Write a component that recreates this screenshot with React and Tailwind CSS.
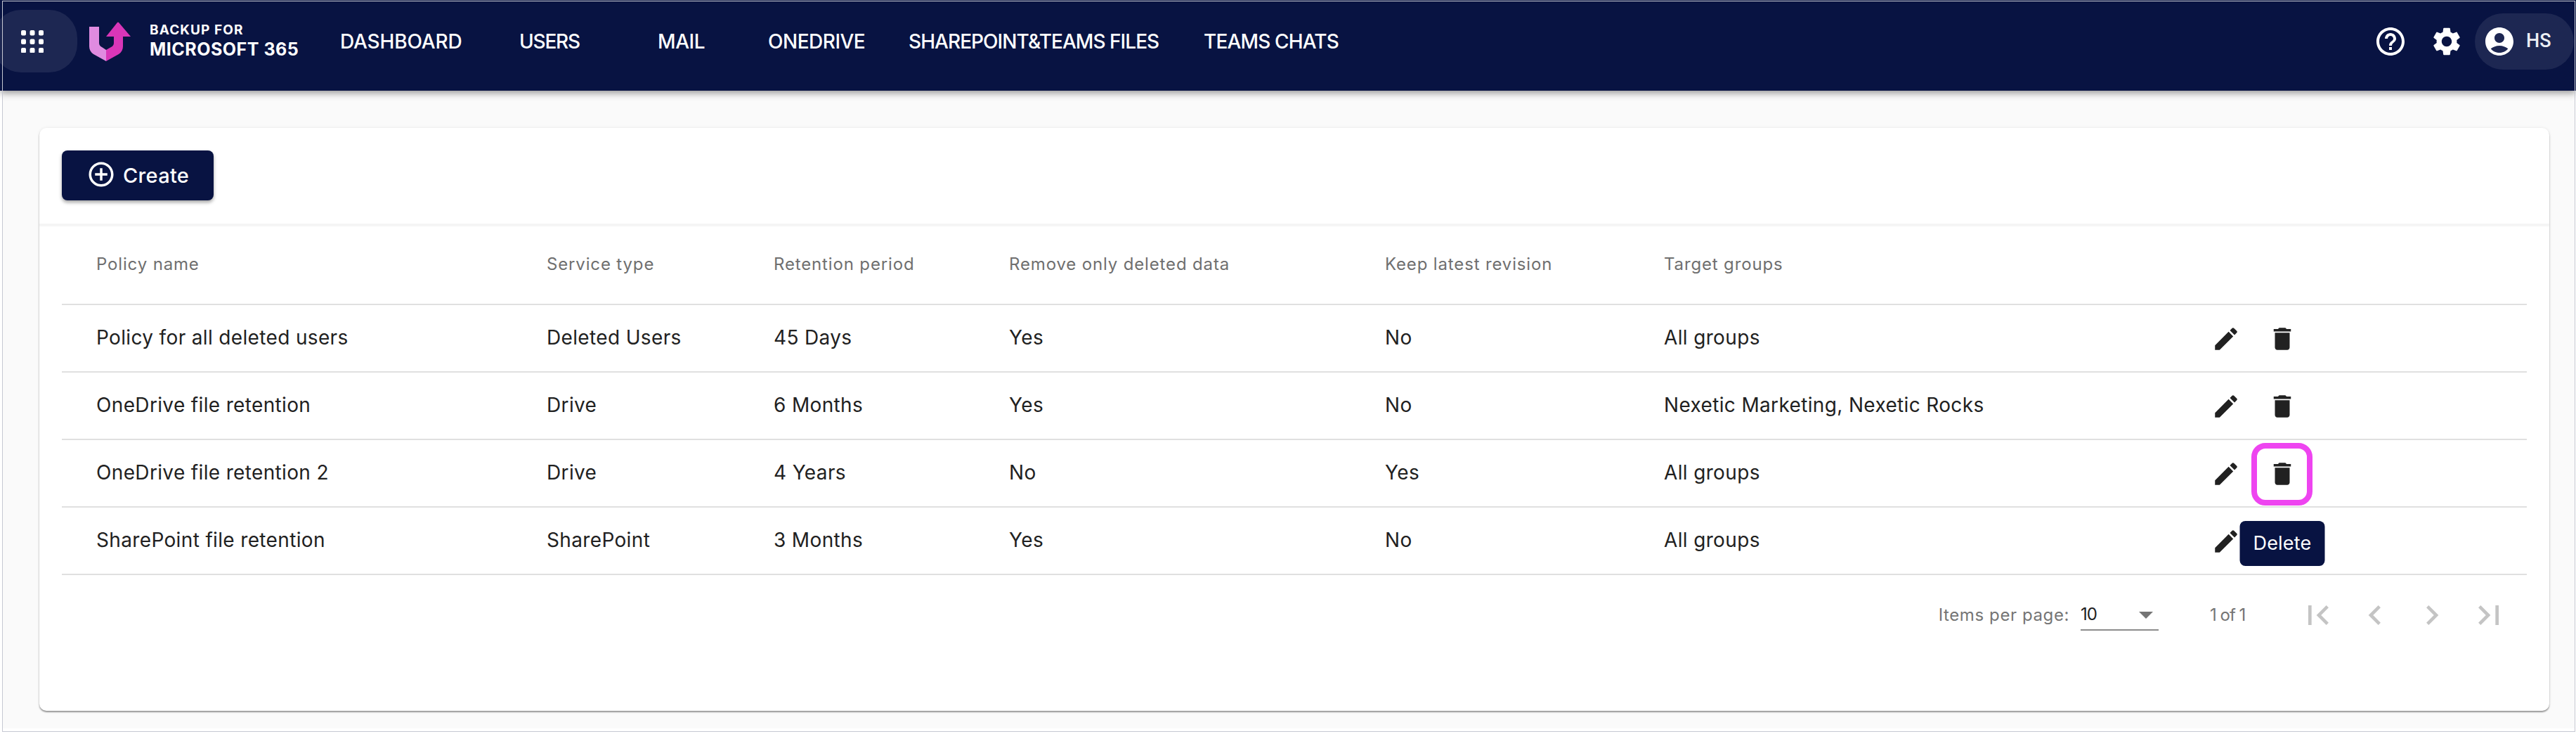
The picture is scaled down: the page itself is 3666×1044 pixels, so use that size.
import React from "react";

const NAVY = "bg-[#081342]";

const P = {
  edit: "M3 17.25V21h3.75L17.81 9.94l-3.75-3.75L3 17.25zM20.71 7.04c.39-.39.39-1.02 0-1.41l-2.34-2.34c-.39-.39-1.02-.39-1.41 0l-1.83 1.83 3.75 3.75 1.83-1.83z",
  del: "M6 19c0 1.1.9 2 2 2h8c1.1 0 2-.9 2-2V7H6v12zM19 4h-3.5l-1-1h-5l-1 1H5v2h14V4z",
  help: "M11 18h2v-2h-2v2zm1-16C6.48 2 2 6.48 2 12s4.48 10 10 10 10-4.48 10-10S17.52 2 12 2zm0 18c-4.41 0-8-3.59-8-8s3.59-8 8-8 8 3.59 8 8-3.59 8-8 8zm0-14c-2.21 0-4 1.79-4 4h2c0-1.1.9-2 2-2s2 .9 2 2c0 2-3 1.75-3 5h2c0-2.25 3-2.5 3-5 0-2.21-1.79-4-4-4z",
  settings: "M19.14 12.94c.04-.3.06-.61.06-.94 0-.32-.02-.64-.07-.94l2.03-1.58c.18-.14.23-.41.12-.61l-1.92-3.32c-.12-.22-.37-.29-.59-.22l-2.39.96c-.5-.38-1.03-.7-1.62-.94l-.36-2.54c-.04-.24-.24-.41-.48-.41h-3.84c-.24 0-.43.17-.47.41l-.36 2.54c-.59.24-1.13.57-1.62.94l-2.39-.96c-.22-.08-.47 0-.59.22L2.74 8.87c-.12.21-.08.47.12.61l2.03 1.58c-.05.3-.09.63-.09.94s.02.64.07.94l-2.03 1.58c-.18.14-.23.41-.12.61l1.92 3.32c.12.22.37.29.59.22l2.39-.96c.5.38 1.03.7 1.62.94l.36 2.54c.05.24.24.41.48.41h3.84c.24 0 .44-.17.47-.41l.36-2.54c.59-.24 1.13-.56 1.62-.94l2.39.96c.22.08.47 0 .59-.22l1.92-3.32c.12-.22.07-.47-.12-.61l-2.01-1.58zM12 15.6c-1.98 0-3.6-1.62-3.6-3.6s1.62-3.6 3.6-3.6 3.6 1.62 3.6 3.6-1.62 3.6-3.6 3.6z",
  account: "M12 2C6.48 2 2 6.48 2 12s4.48 10 10 10 10-4.48 10-10S17.52 2 12 2zm0 4c1.93 0 3.5 1.57 3.5 3.5S13.93 13 12 13s-3.5-1.57-3.5-3.5S10.07 6 12 6zm0 14c-2.03 0-4.43-.82-6.14-2.88C7.55 15.8 9.68 15 12 15s4.45.8 6.14 2.12C16.43 19.18 14.03 20 12 20z",
  add: "M13 7h-2v4H7v2h4v4h2v-4h4v-2h-4V7zm-1-5C6.48 2 2 6.48 2 12s4.48 10 10 10 10-4.48 10-10S17.52 2 12 2zm0 18c-4.41 0-8-3.59-8-8s3.59-8 8-8 8 3.59 8 8-3.59 8-8 8z",
  first: "M18.41 16.59L13.82 12l4.59-4.59L17 6l-6 6 6 6zM6 6h2v12H6z",
  prev: "M15.41 16.59L10.83 12l4.58-4.59L14 6l-6 6 6 6z",
  next: "M8.59 16.59L13.17 12 8.59 7.41 10 6l6 6-6 6z",
  last: "M5.59 7.41L10.18 12l-4.59 4.59L7 18l6-6-6-6zM16 6h2v12h-2z",
  drop: "M7 10l5 5 5-5z",
};

function Icon({ d, className }) {
  return (
    <svg viewBox="0 0 24 24" fill="currentColor" className={className}>
      <path d={d} />
    </svg>
  );
}

function AppsIcon() {
  const pos = [0, 12.5, 25];
  return (
    <svg viewBox="0 0 32 32" className="w-[32px] h-[32px]" fill="#fff">
      {pos.map((y) =>
        pos.map((x) => <rect key={`${x}-${y}`} x={x} y={y} width="7" height="7.6" rx="2" />)
      )}
    </svg>
  );
}

function Logo() {
  return (
    <svg viewBox="0 0 59 56" className="w-[59px] h-[56px] shrink-0">
      <path fill="#e08be0" d="M0 7H14V30Q14 34 18 36L24 40V56L6 46Q0 42 0 35Z" />
      <path fill="#d936b8" d="M24 40L31 36Q35 34 35 30V21H24L40 1Q41 0 42 1L59 21H48V35Q48 42 42 46L24 56Z" />
    </svg>
  );
}

const nav = [
  ["DASHBOARD", "w-[255px] tracking-[-0.15px]"],
  ["USERS", "w-[197px] tracking-[-1.2px]"],
  ["MAIL", "w-[157px] tracking-[-0.4px]"],
  ["ONEDRIVE", "w-[200px] tracking-[-0.5px]"],
  ["SHAREPOINT&TEAMS FILES", "w-[420px] tracking-[-0.95px]"],
  ["TEAMS CHATS", "w-[200px] tracking-[-0.85px]"],
];

const cols = "grid grid-cols-[641px_323px_335px_535px_397px_779px_498px] items-center";

const headers = ["Policy name", "Service type", "Retention period", "Remove only deleted data", "Keep latest revision", "Target groups", ""];

const rows = [
  ["Policy for all deleted users", "Deleted Users", "45 Days", "Yes", "No", "All groups"],
  ["OneDrive file retention", "Drive", "6 Months", "Yes", "No", "Nexetic Marketing, Nexetic Rocks"],
  ["OneDrive file retention 2", "Drive", "4 Years", "No", "Yes", "All groups"],
  ["SharePoint file retention", "SharePoint", "3 Months", "Yes", "No", "All groups"],
];

function Navbar() {
  return (
    <header className={`${NAVY} relative z-10 h-[129px] pt-[14px] shrink-0 shadow-[0_3px_10px_rgba(0,0,0,0.42)]`}>
      <div className="flex items-center h-[89px]">
        <button className="-ml-[10px] w-[120px] h-[89px] rounded-[40px] bg-[#1d2752] flex items-center justify-center pr-[8px] shrink-0">
          <AppsIcon />
        </button>
        <div className="ml-[17px]">
          <Logo />
        </div>
        <div className="ml-[27px] w-[211px] shrink-0 text-white font-bold leading-none -mt-[1px]">
          <div className="text-[19px] tracking-[1.1px]">BACKUP FOR</div>
          <div className="text-[25px] mt-[6px] tracking-[0.5px] whitespace-nowrap">MICROSOFT 365</div>
        </div>
        <nav className="ml-[60px] flex items-center">
          {nav.map(([label, w]) => (
            <a key={label} className={`${w} shrink-0 text-white text-[28px] font-medium whitespace-nowrap`}>
              {label}
            </a>
          ))}
        </nav>
        <div className="ml-auto flex items-center text-white">
          <Icon d={P.help} className="w-[48px] h-[48px]" />
          <Icon d={P.settings} className="ml-[32px] w-[48px] h-[48px]" />
          <div className="ml-[16px] mr-[3px] h-[80px] w-[141px] rounded-full bg-[#1d2752] flex items-center pl-[11px]">
            <Icon d={P.account} className="w-[48px] h-[48px]" />
            <span className="ml-[14px] text-[27px] font-medium font-[Roboto,sans-serif] text-[#eceef4]">HS</span>
          </div>
        </div>
      </div>
    </header>
  );
}

function Actions({ highlighted }) {
  return (
    <div className={`pl-[49px] flex items-center text-[#212121] translate-y-[1px] ${highlighted ? "relative z-20" : ""}`}>
      <Icon d={P.edit} className="w-[42px] h-[42px]" />
      <div className="relative ml-[38px] w-[42px] h-[42px]">
        <Icon d={P.del} className="w-[42px] h-[42px]" />
        {highlighted && (
          <>
            <div className="absolute -left-[23px] -top-[23px] w-[87px] h-[89px] rounded-[20px] border-[8px] border-[#ee44f0]" />
            <div className={`${NAVY} absolute left-1/2 -translate-x-1/2 top-[88px] w-[121px] h-[64px] rounded-[8px] flex items-center justify-center text-white text-[27px] tracking-[0.2px]`}>
              Delete
            </div>
          </>
        )}
      </div>
    </div>
  );
}

function Table() {
  return (
    <div className="mx-[32px]">
      <div className={`${cols} h-[112px] border-b-2 border-[#e0e0e0] text-[24px] tracking-[0.85px] text-[#6f6f6f]`}>
        {headers.map((h, i) => (
          <div key={i} className="pl-[49px] whitespace-nowrap -mt-[2px]">{h}</div>
        ))}
      </div>
      {rows.map((r, i) => (
        <div key={r[0]} className={`${cols} h-[96px] border-b-2 border-[#e0e0e0] text-[28px] text-[#212121] tracking-[0.35px]`}>
          {r.map((c, j) => (
            <div key={j} className="pl-[49px] whitespace-nowrap -mt-[2px]">{c}</div>
          ))}
          <Actions highlighted={i === 2} />
        </div>
      ))}
    </div>
  );
}

function Pagination() {
  return (
    <div className="mx-[32px] h-[114px] pr-[26px] flex items-center justify-end text-[24px] tracking-[0.6px] text-[#757575]">
      <span className="whitespace-nowrap">Items per page:</span>
      <div className="ml-[16px] w-[111px] h-[43px] border-b-2 border-[#8c8c8c] flex items-center justify-between text-[#212121]">
        <span className="tracking-[-1px]">10</span>
        <Icon d={P.drop} className="w-[48px] h-[48px] -mr-[6px] text-[#757575] shrink-0" />
      </div>
      <span className="ml-[73px] w-[51px] tracking-[-1px] whitespace-nowrap">1 of 1</span>
      <div className="ml-[75px] flex items-center gap-[25px] text-[#c4c4c4]">
        <Icon d={P.first} className="w-[56px] h-[56px]" />
        <Icon d={P.prev} className="w-[56px] h-[56px]" />
        <Icon d={P.next} className="w-[56px] h-[56px]" />
        <Icon d={P.last} className="w-[56px] h-[56px]" />
      </div>
    </div>
  );
}

export default function App() {
  return (
    <div className="relative w-[3666px] h-[1044px] overflow-hidden bg-white flex flex-col font-[Inter,sans-serif]">
      <Navbar />
      <main className="ml-[4px] mr-[2px] h-[907px] bg-[#fafafa] pt-[53px] pl-[52px] pr-[36px]">
        <section className="h-[829px] bg-white rounded-[10px] shadow-[0_2px_2px_rgba(0,0,0,0.38),0_0_4px_rgba(0,0,0,0.08)]">
          <div className="h-[140px] pt-[32px] pl-[32px] border-b-4 border-[#f5f5f5]">
            <button className={`${NAVY} w-[216px] h-[71px] rounded-[8px] flex items-center pl-[35px] text-white shadow-[0_3px_5px_rgba(0,0,0,0.35)]`}>
              <Icon d={P.add} className="w-[42px] h-[42px] -mt-[3px]" />
              <span className="ml-[10px] text-[29px] font-medium tracking-[0.3px]">Create</span>
            </button>
          </div>
          <Table />
          <Pagination />
        </section>
      </main>
      <div className="absolute left-[3px] top-[1px] right-[1px] bottom-[3px] border border-[#c6c8d2] pointer-events-none z-30" />
    </div>
  );
}
